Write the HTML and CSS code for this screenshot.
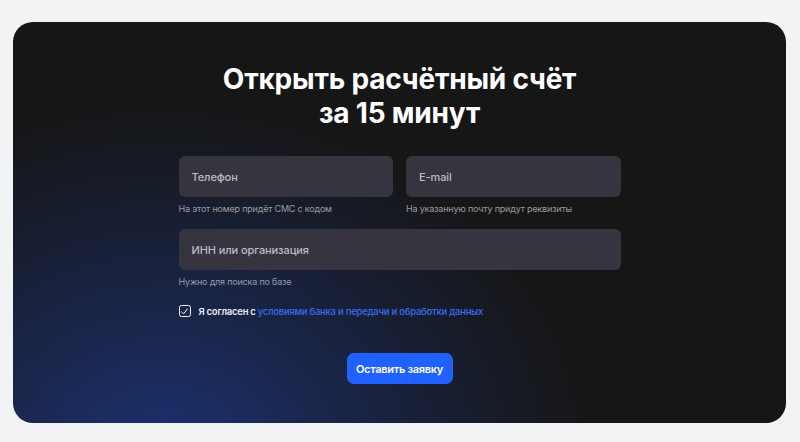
FILE: index.html
```html
<!DOCTYPE html>
<html lang="ru">
<head>
<meta charset="utf-8">
<link rel="stylesheet" href="styles.css">
</head>
<body>
<div class="page">
  <section class="card">
    <h1 class="title">Открыть расчётный счёт<br>за 15 минут</h1>
    <form class="form">
      <div class="row">
        <div class="field">
          <div class="input">Телефон</div>
          <div class="hint">На этот номер придёт СМС с кодом</div>
        </div>
        <div class="field">
          <div class="input">E-mail</div>
          <div class="hint">На указанную почту придут реквизиты</div>
        </div>
      </div>
      <div class="field">
        <div class="input">ИНН или организация</div>
        <div class="hint">Нужно для поиска по базе</div>
      </div>
      <label class="agree">
        <span class="check">
          <svg width="9" height="9" viewBox="0 0 9 9"><path d="M1.6 4.8 L3.6 6.8 L7.4 2" fill="none" stroke="#fff" stroke-width="1" stroke-linecap="round" stroke-linejoin="round"/></svg>
        </span>
        <span class="agree-text">Я согласен с <span class="link">условиями банка и передачи и обработки данных</span></span>
      </label>
      <div class="actions">
        <button type="button" class="btn">Оставить заявку</button>
      </div>
    </form>
  </section>
</div>
</body>
</html>
```
FILE: styles.css
```css
* { box-sizing: border-box; }
html, body { margin: 0; padding: 0; }
body {
  background: #f2f3f5;
  font-family: Inter, "Noto Sans", sans-serif;
}
.page {
  padding: 22px 14px 19px 13px;
}
.card {
  height: 401px;
  border-radius: 20px;
  background-color: #161616;
  background-image: radial-gradient(ellipse 430px 360px at 150px 440px, rgba(28, 50, 115, 1) 0%, rgba(27, 44, 96, 0.7) 40%, rgba(22, 22, 22, 0) 100%);
  padding-top: 40px;
  display: flex;
  flex-direction: column;
  align-items: center;
}
.title {
  margin: 0;
  color: #fff;
  font-size: 28px;
  line-height: 34px;
  font-weight: 700;
  text-align: center;
  letter-spacing: -0.2px;
}
.form {
  width: 442px;
  margin-top: 26px;
  display: flex;
  flex-direction: column;
}
.row {
  display: grid;
  grid-template-columns: 1fr 1fr;
  gap: 13px;
}
.field {
  display: flex;
  flex-direction: column;
  margin-bottom: 13px;
}
.input {
  height: 41px;
  border-radius: 6px;
  background: #35343f;
  color: #bcbcc4;
  font-size: 11px;
  font-weight: 500;
  letter-spacing: -0.1px;
  padding-left: 13px;
  display: flex;
  align-items: center;
}
.hint {
  margin-top: 5px;
  font-size: 9px;
  letter-spacing: -0.2px;
  line-height: 14px;
  color: #9b9ba3;
}
.field:last-of-type { margin-bottom: 0; }
.agree {
  margin-top: 3px;
  display: flex;
  align-items: center;
  gap: 8px;
  height: 12px;
}
.check {
  width: 12px;
  height: 12px;
  border: 1.2px solid #f0f0f0;
  border-radius: 2.5px;
  display: flex;
  align-items: center;
  justify-content: center;
}
.agree-text {
  font-size: 9.5px;
  letter-spacing: -0.25px;
  font-weight: 600;
  color: #ececee;
}
.link {
  color: #3a6cf0;
  font-weight: 500;
}
.actions {
  margin-top: 36px;
  display: flex;
  justify-content: center;
}
.btn {
  width: 106px;
  height: 31px;
  border: 0;
  border-radius: 7px;
  background: #1f62ff;
  color: #fff;
  font-family: Inter, "Noto Sans", sans-serif;
  font-size: 11px;
  letter-spacing: -0.3px;
  font-weight: 600;
  padding: 0;
}
```
